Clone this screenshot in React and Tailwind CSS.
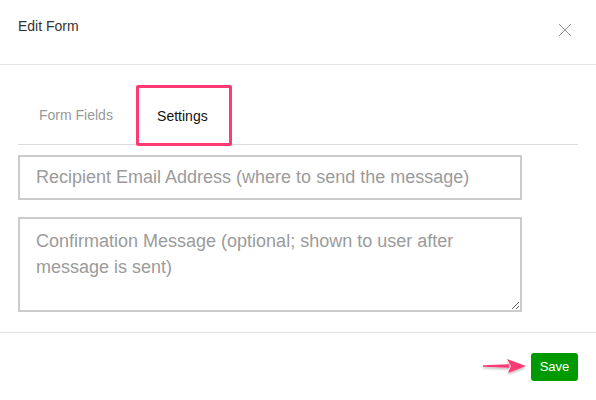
import React from 'react';

const CloseIcon = () => (
  <svg width="14" height="14" viewBox="0 0 14 14" className="block">
    <path d="M1 1L13 13M13 1L1 13" stroke="#9a9a9a" strokeWidth="1" fill="none" />
  </svg>
);

const Arrow = () => (
  <svg width="48" height="20" viewBox="0 0 48 20" className="block">
    <defs>
      <filter id="sh" x="-20%" y="-50%" width="140%" height="200%">
        <feDropShadow dx="0" dy="1.5" stdDeviation="1.2" floodColor="#000" floodOpacity="0.3" />
      </filter>
    </defs>
    <g filter="url(#sh)" fill="#ff3a74">
      <path d="M2 8.2 L28 7.2 L28 10.8 L2 9.8 Z" />
      <path d="M26 2 L45 9 L27 16 L30 9 Z" />
    </g>
  </svg>
);

export default function App() {
  return (
    <div className="w-[596px] h-[400px] bg-white font-['Liberation_Sans',Arial,sans-serif] overflow-hidden">
      <div className="h-[65px] border-b border-[#e3e3e3] flex items-start justify-between pl-[18px] pr-[24px] pt-[16px]">
        <h1 className="text-[14px] leading-[20px] text-[#333]">Edit Form</h1>
        <button className="mt-[7px]">
          <CloseIcon />
        </button>
      </div>

      <div className="px-[18px] pt-[20px] pb-[20px]">
        <div className="flex border-b border-[#dcdcdc] h-[60px]">
          <div className="h-full pl-[21px] pr-[23px] pt-[2px] flex items-center text-[14px] text-[#999]">Form Fields</div>
          <div className="h-[61px] w-[96px] border-[3px] border-[#ff3a74] rounded-[2px] bg-white pt-[2px] pr-[3px] flex items-center justify-center text-[14px] text-[#111]">
            Settings
          </div>
        </div>

        <input
          type="text"
          placeholder="Recipient Email Address (where to send the message)"
          className="mt-[10px] block w-[504px] h-[45px] border-2 border-[#cccccc] px-[16px] text-[18px] text-[#333] placeholder:text-[#9b9b9b] outline-none"
        />
        <textarea
          placeholder="Confirmation Message (optional; shown to user after message is sent)"
          className="mt-[17px] block w-[504px] h-[95px] border-2 border-[#cccccc] px-[16px] pt-[9px] text-[18px] leading-[26px] text-[#333] placeholder:text-[#9b9b9b] outline-none"
        />
      </div>

      <div className="border-t border-[#e3e3e3] flex items-center justify-end pr-[18px] pt-[20px]">
        <Arrow />
        <button className="ml-[2px] w-[47px] h-[28px] rounded-[3px] bg-[#009a00] text-white text-[13px]">Save</button>
      </div>
    </div>
  );
}
